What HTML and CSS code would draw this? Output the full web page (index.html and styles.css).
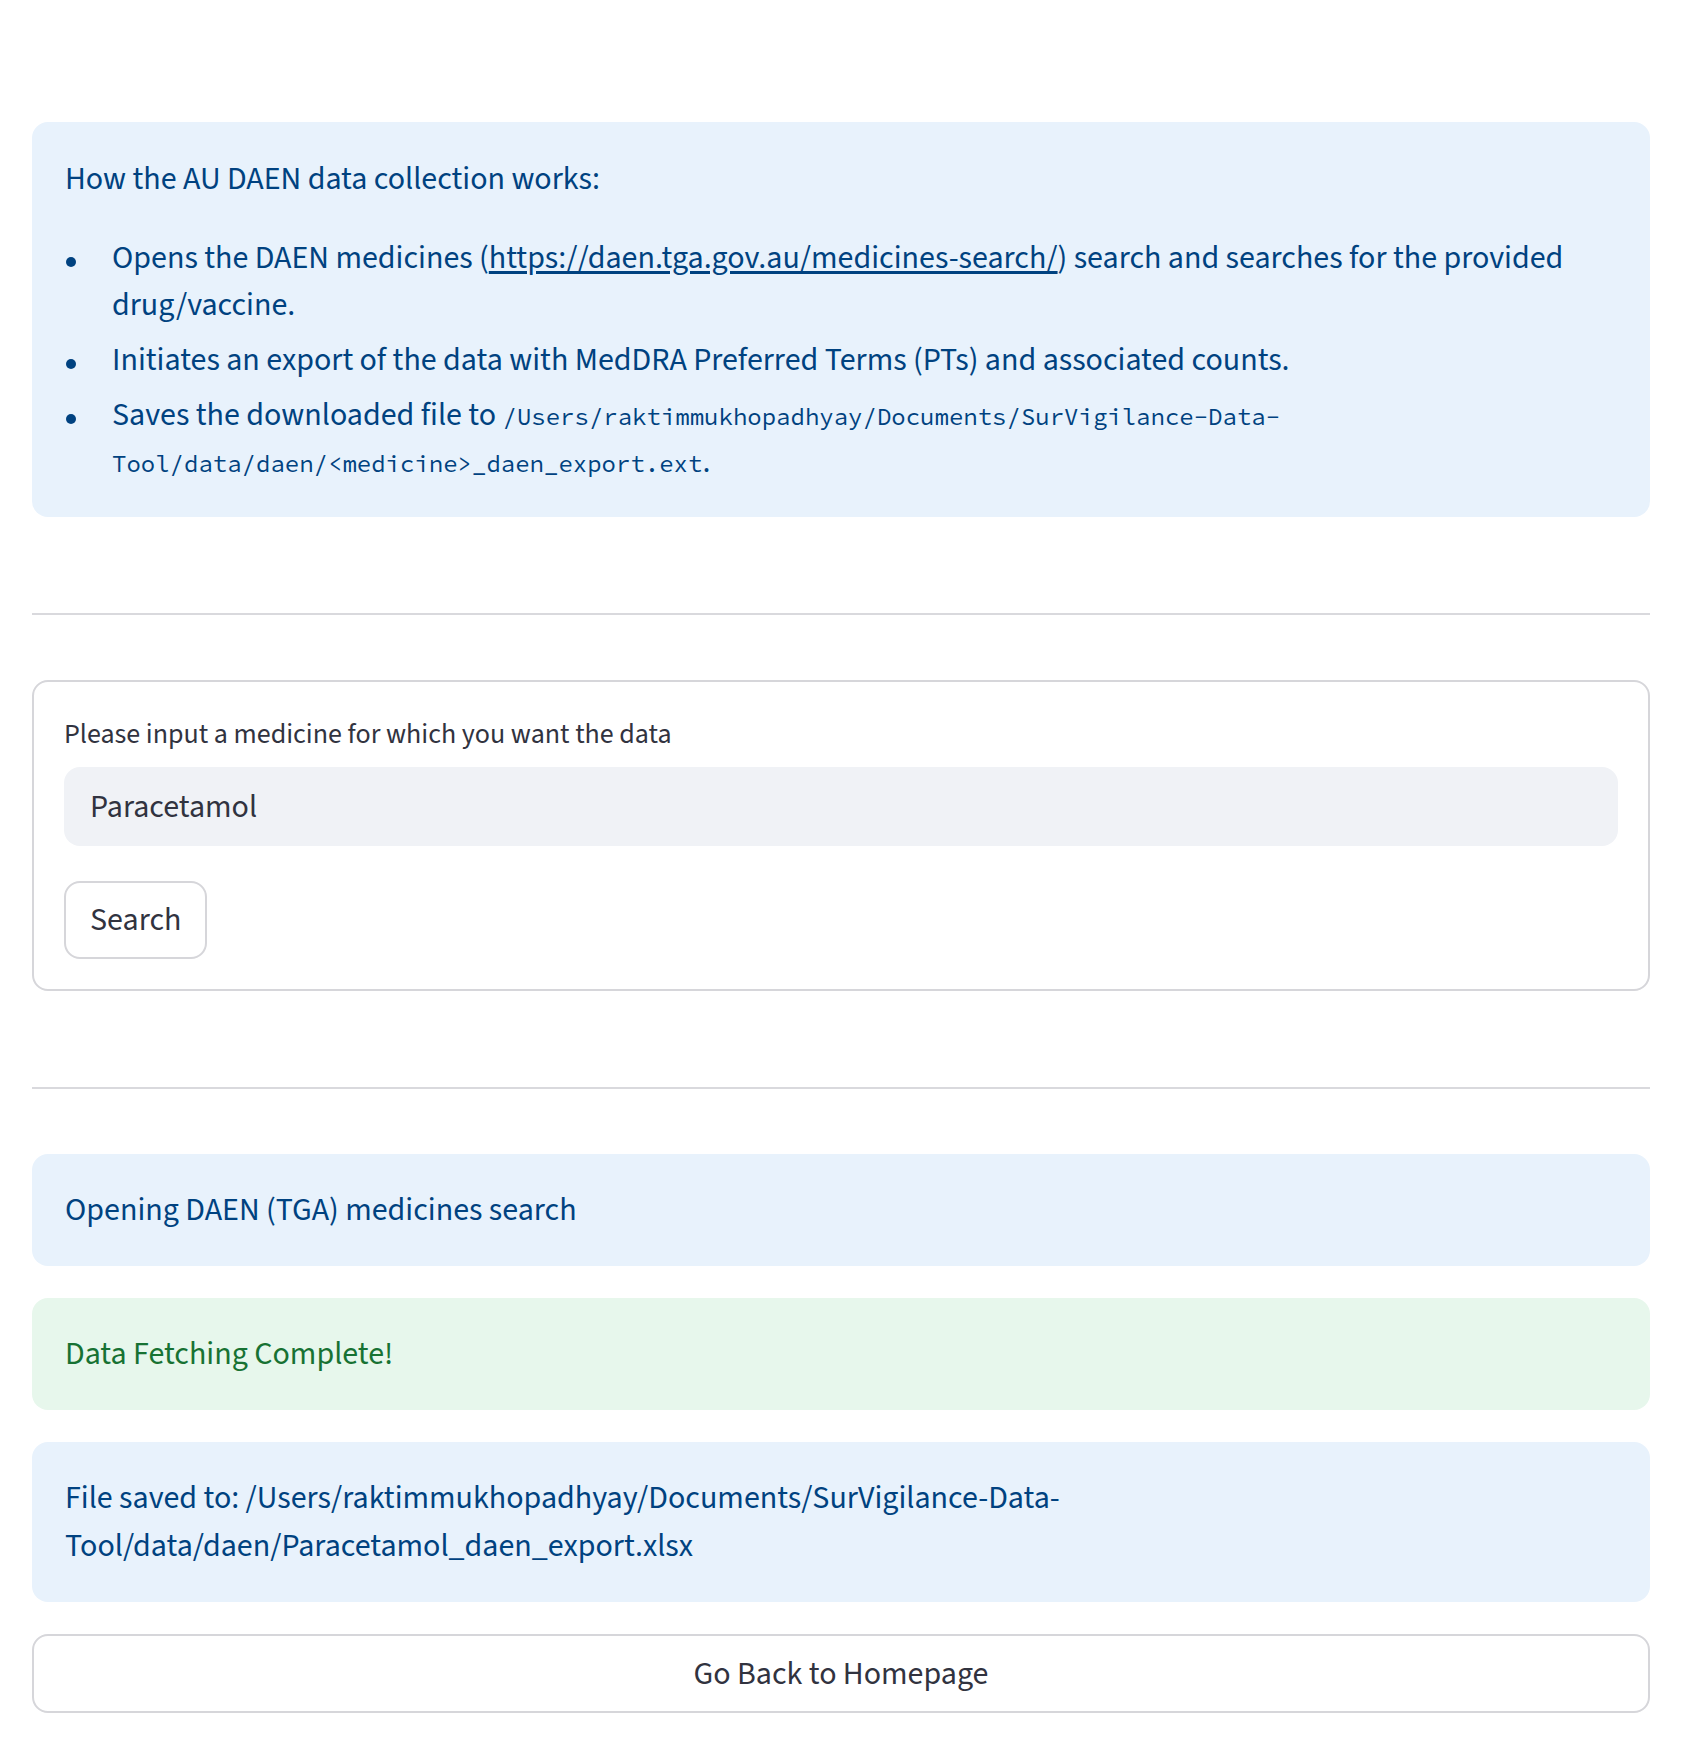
FILE: index.html
```html
<!DOCTYPE html>
<html lang="en">
<head>
<meta charset="utf-8">
<title>AU DAEN data collection</title>
<link rel="stylesheet" href="styles.css">
</head>
<body>
<main class="page">
  <section class="alert alert-info intro">
    <p class="intro-title">How the AU DAEN data collection works:</p>
    <ul class="steps">
      <li><span>Opens the DAEN medicines (<a href="#">https://daen.tga.gov.au/medicines-search/</a>) search and searches for the provided drug/vaccine.</span></li>
      <li><span>Initiates an export of the data with MedDRA Preferred Terms (PTs) and associated counts.</span></li>
      <li><span>Saves the downloaded file to <code>/Users/raktimmukhopadhyay/Documents/SurVigilance-Data-Tool/data/daen/&lt;medicine&gt;_daen_export.ext</code>.</span></li>
    </ul>
  </section>

  <hr class="divider">

  <form class="form-box" onsubmit="return false;">
    <label class="field-label" for="medicine">Please input a medicine for which you want the data</label>
    <input class="text-input" id="medicine" type="text" value="Paracetamol">
    <div class="form-actions">
      <button class="btn" type="button">Search</button>
    </div>
  </form>

  <hr class="divider">

  <div class="alert alert-info"><p>Opening DAEN (TGA) medicines search</p></div>
  <div class="alert alert-success"><p>Data Fetching Complete!</p></div>
  <div class="alert alert-info"><p>File saved to: /Users/raktimmukhopadhyay/Documents/SurVigilance-Data-Tool/data/daen/Paracetamol_daen_export.xlsx</p></div>

  <button class="btn btn-wide" type="button">Go Back to Homepage</button>
</main>
</body>
</html>
```

FILE: styles.css
```css
* { box-sizing: border-box; }

html, body {
  margin: 0;
  padding: 0;
  background: #ffffff;
}

body {
  font-family: "Source Sans Pro", "Source Sans 3", Lato, sans-serif;
  font-size: 32px;
  line-height: 47px;
  color: #31333f;
}

.page {
  display: flex;
  flex-direction: column;
  gap: 32px;
  padding: 122px 32px 28px 32px;
}

.alert {
  border-radius: 16px;
  padding: 32px 33px;
}

.alert p {
  margin: 0;
  line-height: 48px;
}

.alert-info {
  background: #e8f2fc;
  color: #004280;
}

.alert-success {
  background: #e7f7ec;
  color: #177233;
}

.intro {
  padding: 34px 33px 31px 33px;
}

.intro .intro-title {
  margin: 0 0 32px 0;
  line-height: 47px;
}

.steps {
  list-style: none;
  margin: 0;
  padding: 0;
}

.steps li {
  display: grid;
  grid-template-columns: 47px 1fr;
  margin-top: 8px;
  line-height: 47px;
}

.steps li:first-child { margin-top: 0; }

.steps li::before {
  content: "";
  width: 10px;
  height: 10px;
  border-radius: 50%;
  background: currentColor;
  margin: 22px 0 0 1px;
}

.steps a {
  color: inherit;
  text-decoration: underline;
  text-underline-offset: 3px;
}

.steps code {
  font-family: "Source Code Pro", "DejaVu Sans Mono", monospace;
  font-size: 24px;
  line-height: 1;
}

.divider {
  border: none;
  height: 2px;
  background: #d9d9dd;
  margin: 64px 0 33px 0;
}

.form-box {
  border: 2px solid #d6d6da;
  border-radius: 16px;
  padding: 30px;
  display: flex;
  flex-direction: column;
}

.field-label {
  font-size: 28px;
  line-height: 45px;
  margin-bottom: 10px;
  color: #31333f;
}

.text-input {
  height: 79px;
  border: none;
  border-radius: 16px;
  background: #f0f2f6;
  font-family: inherit;
  font-size: 32px;
  color: #31333f;
  padding: 0 26px;
  outline: none;
}

.form-actions {
  margin-top: 35px;
  display: flex;
}

.btn {
  font-family: inherit;
  font-size: 32px;
  color: #31333f;
  background: #ffffff;
  border: 2px solid #d6d6da;
  border-radius: 16px;
  height: 78px;
  padding: 0 24px;
}

.btn-wide {
  width: 100%;
  height: 79px;
}
```
